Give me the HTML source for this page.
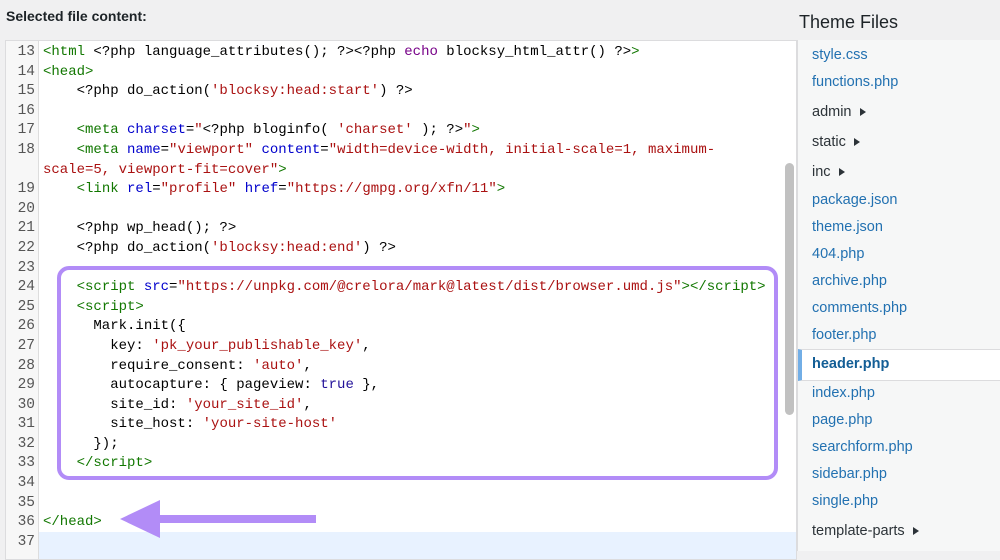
<!DOCTYPE html>
<html><head><meta charset="utf-8"><style>
*{margin:0;padding:0;box-sizing:border-box}
body{width:1000px;height:551px;overflow:hidden;background:#f0f0f1;font-family:"Liberation Sans",sans-serif;position:relative}
.lbl{position:absolute;left:6px;top:8px;font-size:14px;font-weight:bold;color:#1d2327}
.ed{position:absolute;left:5px;top:40px;width:792px;height:520px;background:#fff;border:1px solid #dcdcde;overflow:hidden}
.gut{position:absolute;left:0;top:0;width:33px;height:100%;background:#f7f7f7;border-right:1px solid #ddd}
.code{position:absolute;left:0;top:2px;font-family:"Liberation Mono",monospace;font-size:14px;line-height:19.6px;color:#000}
.row{position:relative;height:19.6px;white-space:pre}
.n{position:absolute;left:0;width:29px;text-align:right;color:#555;font-size:14.5px}
.t{position:absolute;left:37px}
.g{color:#170}.a{color:#00c}.s{color:#a11}.k{color:#708}.b{color:#219}
.hl{position:absolute;left:33px;top:491px;width:760px;height:30px;background:#e8f2ff}
.sb{position:absolute;left:779px;top:122px;width:9px;height:252px;background:#c1c1c1;border-radius:5px}
.side{position:absolute;left:797px;top:40px;width:203px;height:511px;background:#f6f7f7;border-left:1px solid #dcdcde}
.ttl{position:absolute;left:799px;top:12px;font-size:18px;color:#1d2327}
.it{position:absolute;left:14px;font-size:14.5px;color:#2271b1;white-space:nowrap}
.d{color:#2c3338}
.d:after{content:"";display:inline-block;margin-left:8px;border-left:6px solid #2c3338;border-top:4.5px solid transparent;border-bottom:4.5px solid transparent}
.sel{position:absolute;left:0;top:309px;width:203px;height:32px;background:#fff;border-top:1px solid #dcdcde;border-bottom:1px solid #dcdcde;border-left:4px solid #72aee6}
.box{position:absolute;left:57px;top:266px;width:721px;height:214px;border:4px solid #b28cf7;border-radius:12px}
</style></head><body>
<div class="lbl">Selected file content:</div>
<div class="ed">
<div class="gut"></div>
<div class="hl"></div>
<div class="code">
<div class="row"><span class="n">13</span><span class="t"><span class="g">&lt;html</span> &lt;?php language_attributes(); ?&gt;&lt;?php <span class="k">echo</span> blocksy_html_attr() ?&gt;<span class="g">&gt;</span></span></div>
<div class="row"><span class="n">14</span><span class="t"><span class="g">&lt;head&gt;</span></span></div>
<div class="row"><span class="n">15</span><span class="t">    &lt;?php do_action(<span class="s">'blocksy:head:start'</span>) ?&gt;</span></div>
<div class="row"><span class="n">16</span><span class="t"></span></div>
<div class="row"><span class="n">17</span><span class="t">    <span class="g">&lt;meta</span> <span class="a">charset</span>=<span class="s">"</span>&lt;?php bloginfo( <span class="s">'charset'</span> ); ?&gt;<span class="s">"</span><span class="g">&gt;</span></span></div>
<div class="row"><span class="n">18</span><span class="t">    <span class="g">&lt;meta</span> <span class="a">name</span>=<span class="s">"viewport"</span> <span class="a">content</span>=<span class="s">"width=device-width, initial-scale=1, maximum-</span></span></div>
<div class="row"><span class="t"><span class="s">scale=5, viewport-fit=cover"</span><span class="g">&gt;</span></span></div>
<div class="row"><span class="n">19</span><span class="t">    <span class="g">&lt;link</span> <span class="a">rel</span>=<span class="s">"profile"</span> <span class="a">href</span>=<span class="s">"https://gmpg.org/xfn/11"</span><span class="g">&gt;</span></span></div>
<div class="row"><span class="n">20</span><span class="t"></span></div>
<div class="row"><span class="n">21</span><span class="t">    &lt;?php wp_head(); ?&gt;</span></div>
<div class="row"><span class="n">22</span><span class="t">    &lt;?php do_action(<span class="s">'blocksy:head:end'</span>) ?&gt;</span></div>
<div class="row"><span class="n">23</span><span class="t"></span></div>
<div class="row"><span class="n">24</span><span class="t">    <span class="g">&lt;script</span> <span class="a">src</span>=<span class="s">"https://unpkg.com/@crelora/mark@latest/dist/browser.umd.js"</span><span class="g">&gt;&lt;/script&gt;</span></span></div>
<div class="row"><span class="n">25</span><span class="t">    <span class="g">&lt;script&gt;</span></span></div>
<div class="row"><span class="n">26</span><span class="t">      Mark.init({</span></div>
<div class="row"><span class="n">27</span><span class="t">        key: <span class="s">'pk_your_publishable_key'</span>,</span></div>
<div class="row"><span class="n">28</span><span class="t">        require_consent: <span class="s">'auto'</span>,</span></div>
<div class="row"><span class="n">29</span><span class="t">        autocapture: { pageview: <span class="b">true</span> },</span></div>
<div class="row"><span class="n">30</span><span class="t">        site_id: <span class="s">'your_site_id'</span>,</span></div>
<div class="row"><span class="n">31</span><span class="t">        site_host: <span class="s">'your-site-host'</span></span></div>
<div class="row"><span class="n">32</span><span class="t">      });</span></div>
<div class="row"><span class="n">33</span><span class="t">    <span class="g">&lt;/script&gt;</span></span></div>
<div class="row"><span class="n">34</span><span class="t"></span></div>
<div class="row"><span class="n">35</span><span class="t"></span></div>
<div class="row"><span class="n">36</span><span class="t"><span class="g">&lt;/head&gt;</span></span></div>
<div class="row"><span class="n">37</span><span class="t"></span></div>
</div>
<div class="sb"></div>
</div>
<div class="box"></div>
<svg style="position:absolute;left:0;top:0" width="1000" height="551"><polygon points="120,519 160,500 160,538" fill="#b28cf7"/><rect x="158" y="515" width="158" height="8" fill="#b28cf7"/></svg>
<div class="ttl">Theme Files</div>
<div class="side">
<div class="sel"></div>
<div class="it" style="top:7px">style.css</div>
<div class="it" style="top:34px">functions.php</div>
<div class="it d" style="top:64px">admin</div>
<div class="it d" style="top:94px">static</div>
<div class="it d" style="top:124px">inc</div>
<div class="it" style="top:152px">package.json</div>
<div class="it" style="top:179px">theme.json</div>
<div class="it" style="top:206px">404.php</div>
<div class="it" style="top:233px">archive.php</div>
<div class="it" style="top:260px">comments.php</div>
<div class="it" style="top:287px">footer.php</div>
<div class="it" style="top:316px;font-weight:bold;color:#135e96">header.php</div>
<div class="it" style="top:345px">index.php</div>
<div class="it" style="top:372px">page.php</div>
<div class="it" style="top:399px">searchform.php</div>
<div class="it" style="top:426px">sidebar.php</div>
<div class="it" style="top:453px">single.php</div>
<div class="it d" style="top:483px">template-parts</div>
</div>
</body></html>
